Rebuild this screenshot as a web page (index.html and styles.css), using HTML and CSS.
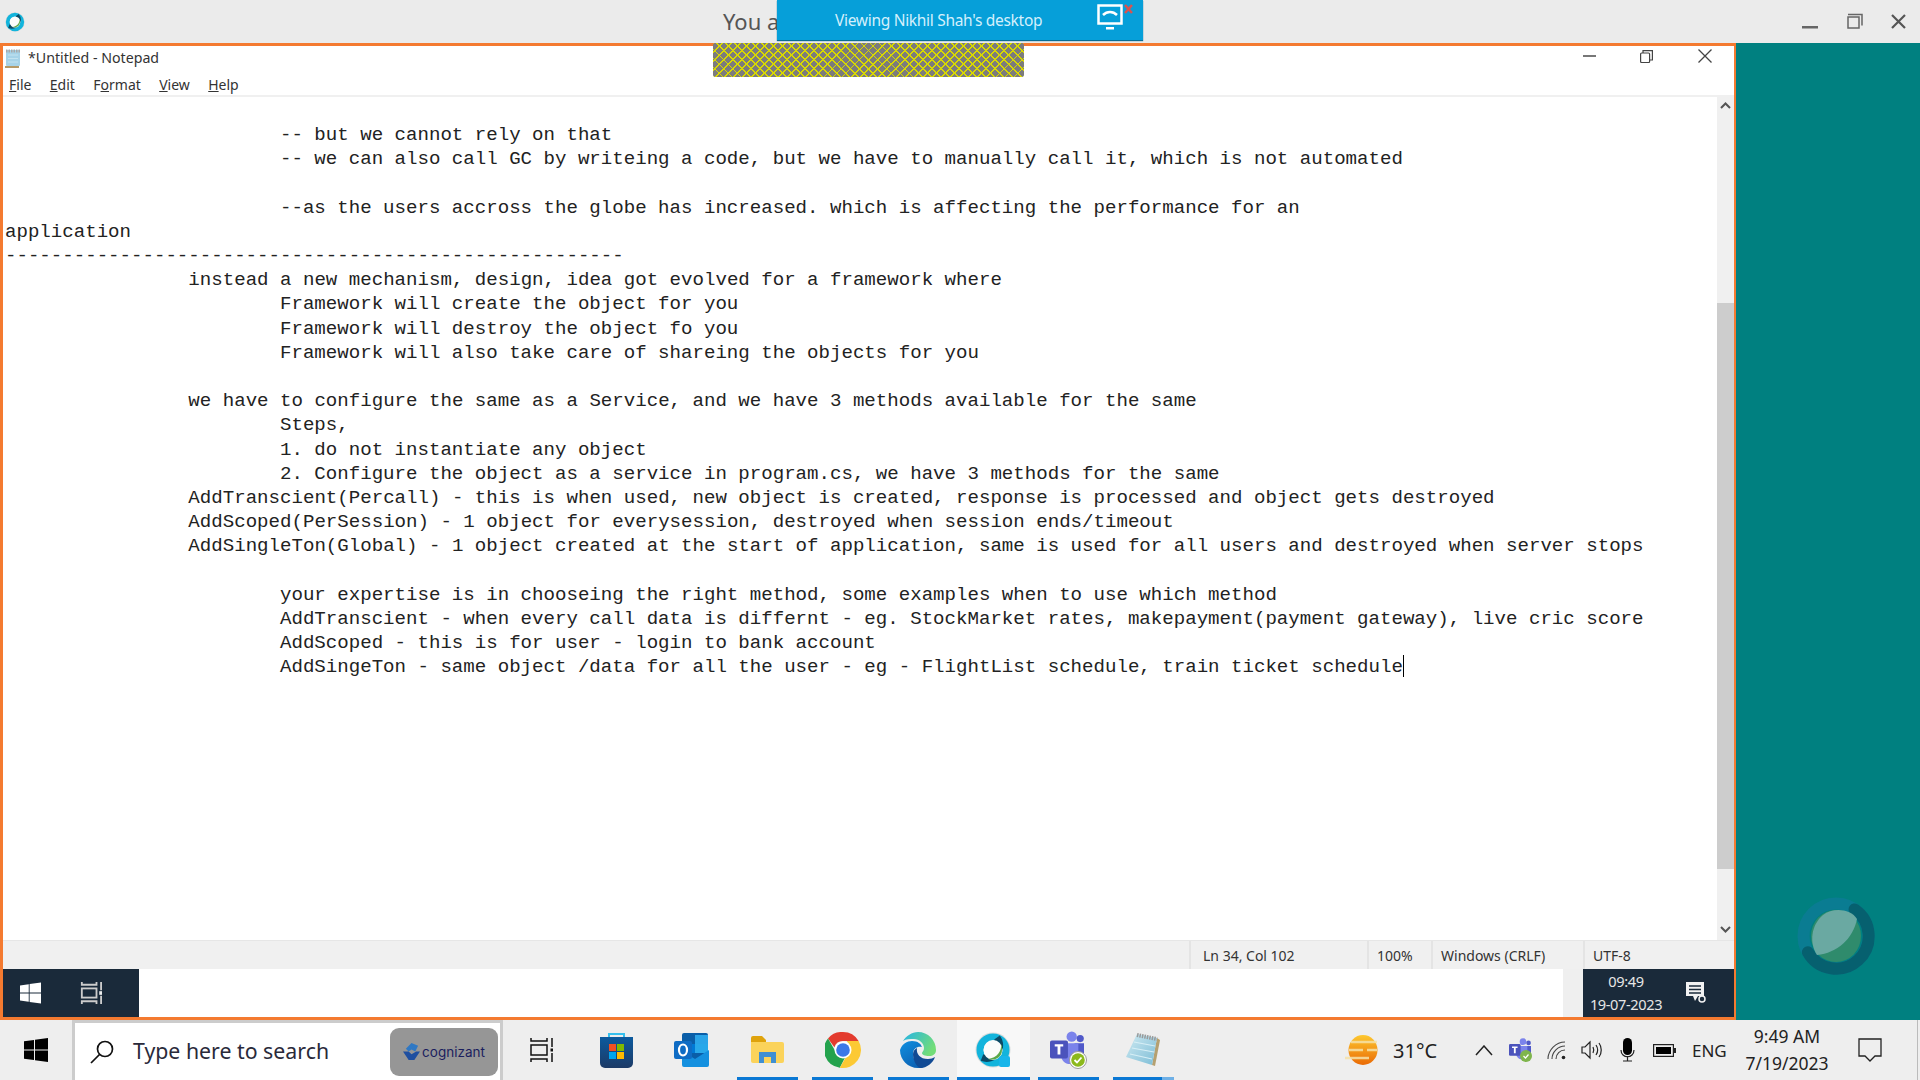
FILE: index.html
```html
<!DOCTYPE html>
<html lang="en">
<head>
    <meta charset="UTF-8">
    <title>Untitled - Notepad</title>
    <link rel="stylesheet" href="styles.css">
</head>
<body>

    <svg class="defs" aria-hidden="true">
        <defs>
            <linearGradient id="edgeB" x1="0" y1="0" x2="1" y2="0.5">
                <stop offset="0" stop-color="#25b4e6"/>
                <stop offset="1" stop-color="#72dd78"/>
            </linearGradient>
            <linearGradient id="edgeA" x1="0" y1="0" x2="0.6" y2="1">
                <stop offset="0" stop-color="#1190e0"/>
                <stop offset="1" stop-color="#0c62b4"/>
            </linearGradient>
            <linearGradient id="sun" x1="0" y1="0" x2="0" y2="1">
                <stop offset="0" stop-color="#fdc82f"/>
                <stop offset="1" stop-color="#ea6a05"/>
            </linearGradient>
            <linearGradient id="bag" x1="0" y1="0" x2="0" y2="1">
                <stop offset="0" stop-color="#0c5a9e"/>
                <stop offset="1" stop-color="#1c3a66"/>
            </linearGradient>
            <linearGradient id="page" x1="0" y1="0" x2="1" y2="1">
                <stop offset="0" stop-color="#cfeaf2"/>
                <stop offset="1" stop-color="#7dbdd6"/>
            </linearGradient>
            <symbol id="webex" viewBox="0 0 36 36">
                <circle cx="18" cy="18" r="17.500" fill="#d8dcdc"/>
                <circle cx="18" cy="18" r="13" fill="none" stroke="#12b4dc" stroke-width="7"/>
                <path d="M22 5.500a13 13 0 0 1-15 20" fill="none" stroke="#0b4a66" stroke-width="7"/>
                <ellipse cx="18" cy="18" rx="9.500" ry="10" fill="#fafcfb"/>
                <path d="M26 12c1 7-4 14-13 15 6 2 14-1 14-9 0-2 0-4-1-6z" fill="#5ba84a"/>
            </symbol>
            <symbol id="teams" viewBox="0 0 38 36">
                <circle cx="24" cy="6" r="5.500" fill="#7b83eb"/>
                <circle cx="33" cy="8" r="3.800" fill="#5059c9"/>
                <path d="M27 13h10v11c0 3-3 5-6 5s-4-1-4-3z" fill="#5059c9"/>
                <path d="M13 13h18v14c0 5-4 8-9 8s-9-4-9-8z" fill="#7b83eb"/>
                <rect x="1" y="10" width="19" height="19" rx="2" fill="#4b53bc"/>
                <path d="M6 14h9v2.500h-3V25H9v-8.500H6z" fill="#fff"/>
            </symbol>
        </defs>
    </svg>

    <header class="meeting-bar">
        <svg class="meeting-logo" viewBox="0 0 36 36"><use href="#webex"/></svg>
        <span class="meeting-title">You a</span>
        <div class="meeting-controls">
            <svg class="ctl-min" viewBox="0 0 16 3"><rect width="16" height="2.500" fill="#666"/></svg>
            <svg class="ctl-restore" viewBox="0 0 16 16" fill="none" stroke="#666" stroke-width="1.500"><rect x="1" y="4" width="11" height="11"/><path d="M1 1.500h14v11"/></svg>
            <svg class="ctl-close" viewBox="0 0 15 15" stroke="#555" stroke-width="2.200"><path d="M1 1l13 13M14 1L1 14"/></svg>
        </div>
    </header>

    <div class="share-tab">
        <span class="share-text">Viewing Nikhil Shah's desktop</span>
        <svg class="share-icon" viewBox="0 0 38 26" fill="none">
            <rect x="1.500" y="1.500" width="23" height="18" stroke="#fff" stroke-width="2.500"/>
            <path d="M6 11c4-4 10-4 14 0" stroke="#fff" stroke-width="2.500"/>
            <rect x="9" y="23" width="8" height="2.500" fill="#fff"/>
            <path d="M28 1l7 8M35 1l-7 8" stroke="#d9534f" stroke-width="2.500"/>
        </svg>
    </div>

    <div class="desktop">
        <main class="window">
            <div class="share-hatch"></div>

            <div class="title-row">
                <svg class="note-icon" viewBox="0 0 18 20">
                    <path d="M1 19h14" stroke="#b59a68" stroke-width="2"/>
                    <rect x="2" y="2" width="14" height="16" rx="1" fill="#a6d3e8"/>
                    <path d="M2 3h14" stroke="#a9a9a9" stroke-width="3" stroke-dasharray="1.500 1"/>
                    <path d="M4 7h10M4 10.500h10M4 14h10" stroke="#c3e3f0"/>
                </svg>
                <span class="title-text">*Untitled - Notepad</span>
                <div class="win-controls">
                    <svg class="win-min" viewBox="0 0 13 2"><rect width="13" height="2" fill="#777"/></svg>
                    <svg class="win-restore" viewBox="0 0 13 13" fill="none" stroke="#444" stroke-width="1.200"><rect x="0.600" y="3" width="9" height="9.500" rx="1"/><path d="M3 3V0.700h9.400V10H10"/></svg>
                    <svg class="win-close" viewBox="0 0 14 14" stroke="#444" stroke-width="1.300"><path d="M0.500 0.500l13 13M13.500 0.500l-13 13"/></svg>
                </div>
            </div>

            <nav class="menu-row">
                <span><u>F</u>ile</span>
                <span><u>E</u>dit</span>
                <span>F<u>o</u>rmat</span>
                <span><u>V</u>iew</span>
                <span><u>H</u>elp</span>
            </nav>

            <div class="editor">
<pre class="editor-text">			-- but we cannot rely on that
			-- we can also call GC by writeing a code, but we have to manually call it, which is not automated

			--as the users accross the globe has increased. which is affecting the performance for an
application
------------------------------------------------------
		instead a new mechanism, design, idea got evolved for a framework where
			Framework will create the object for you
			Framework will destroy the object fo you
			Framework will also take care of shareing the objects for you

		we have to configure the same as a Service, and we have 3 methods available for the same
			Steps,
			1. do not instantiate any object
			2. Configure the object as a service in program.cs, we have 3 methods for the same
		AddTranscient(Percall) - this is when used, new object is created, response is processed and object gets destroyed
		AddScoped(PerSession) - 1 object for everysession, destroyed when session ends/timeout
		AddSingleTon(Global) - 1 object created at the start of application, same is used for all users and destroyed when server stops

			your expertise is in chooseing the right method, some examples when to use which method
			AddTranscient - when every call data is differnt - eg. StockMarket rates, makepayment(payment gateway), live cric score
			AddScoped - this is for user - login to bank account
			AddSingeTon - same object /data for all the user - eg - FlightList schedule, train ticket schedule<span class="caret"></span></pre>
                <div class="scrollbar">
                    <svg class="arrow" viewBox="0 0 17 17" fill="none" stroke="#555" stroke-width="2"><path d="M4 11l4.500-4.500L13 11"/></svg>
                    <div class="thumb"></div>
                    <svg class="arrow arrow-down" viewBox="0 0 17 17" fill="none" stroke="#555" stroke-width="2"><path d="M4 6l4.500 4.500L13 6"/></svg>
                </div>
            </div>

            <div class="status-row">
                <span class="status-cell cell-pos">Ln 34, Col 102</span>
                <span class="status-cell cell-zoom">100%</span>
                <span class="status-cell cell-eol">Windows (CRLF)</span>
                <span class="status-cell cell-enc">UTF-8</span>
            </div>

            <div class="remote-bar">
                <div class="remote-left">
                    <svg class="remote-start" viewBox="0 0 24 24" fill="#fff"><path d="M0 3.300L10 2v9.400H0zM11 1.800L24 0v11.400H11zM0 12.600h10V22L0 20.700zM11 12.600h13V24l-13-1.800z"/></svg>
                    <svg class="remote-tasks" viewBox="0 0 24 24" fill="none" stroke="#ccc" stroke-width="2"><path d="M2 0v3h16V0M2 24v-3h16v3M23 0v9M23 15v9"/><rect x="2" y="7" width="16" height="10"/><rect x="21" y="10" width="4" height="4" fill="#eee" stroke="none"/></svg>
                </div>
                <div class="remote-fill"></div>
                <div class="remote-gap"></div>
                <div class="remote-clock">
                    <div class="remote-time">
                        <span>09:49</span>
                        <span>19-07-2023</span>
                    </div>
                    <svg class="remote-note" viewBox="0 0 20 22"><path d="M0 0h18v14l-6 0-3 5-2-5H0z" fill="#f2f2f2"/><path d="M3 4h12M3 7.500h12M3 11h12" stroke="#1a2a3a" stroke-width="1.300"/><circle cx="16" cy="17" r="3" fill="none" stroke="#f2f2f2" stroke-width="1.500"/></svg>
                </div>
            </div>
        </main>

        <aside class="wallpaper">
            <svg class="wallpaper-logo" viewBox="0 0 78 78" fill="none">
                <circle cx="39" cy="39" r="32.500" stroke="#0a7c92" stroke-width="12"/>
                <path d="M57.600 12.400A32.500 32.500 0 1 1 10.900 55.200" stroke="#06606f" stroke-width="12" stroke-linecap="round"/>
                <ellipse cx="39" cy="39" rx="25" ry="26" fill="#2f8b6c"/>
                <path d="M60 22C54 12 36 10 26 18 14 28 12 46 20 58 40 56 56 42 60 22z" fill="#6aa9a2"/>
            </svg>
        </aside>
    </div>

    <footer class="taskbar">
        <div class="start-btn">
            <svg class="start-icon" viewBox="0 0 24 24" fill="#000"><path d="M0 3.300L10 2v9.400H0zM11 1.800L24 0v11.400H11zM0 12.600h10V22L0 20.700zM11 12.600h13V24l-13-1.800z"/></svg>
        </div>

        <div class="search-box">
            <svg class="search-icon" viewBox="0 0 24 24" fill="none" stroke="#111" stroke-width="1.700"><circle cx="15" cy="9" r="7.500"/><path d="M9.500 14.500L1 23"/></svg>
            <span class="search-text">Type here to search</span>
            <div class="brand-pill">
                <svg class="brand-icon" viewBox="0 0 18 18"><path d="M9 0l7 3-3 6-4-2-3 2-3-3z" fill="#2f78c4"/><path d="M0 9l6 0 3 3 5-3 4 0-6 9-6 0z" fill="#1f4fa0"/></svg>
                <span class="brand-text">cognizant</span>
            </div>
        </div>

        <div class="apps">
            <div class="app">
                <svg class="icon-tasks" viewBox="0 0 24 24" fill="none" stroke="#111" stroke-width="1.500"><path d="M2 0v3h16V0M2 24v-3h16v3M23 0v9M23 15v9"/><rect x="2" y="7" width="16" height="10"/><rect x="21.500" y="10.500" width="3" height="3" fill="#111" stroke="none"/></svg>
            </div>
            <div class="app">
                <svg class="icon-store" viewBox="0 0 35 36">
                    <path d="M10 6V2h15v4" fill="none" stroke="#35c0ee" stroke-width="2"/>
                    <path d="M1 5h33v26a5 5 0 0 1-5 5H6a5 5 0 0 1-5-5z" fill="url(#bag)"/>
                    <rect x="10" y="12" width="7" height="7" fill="#f25022"/>
                    <rect x="18" y="12" width="7" height="7" fill="#7fba00"/>
                    <rect x="10" y="20" width="7" height="7" fill="#00a4ef"/>
                    <rect x="18" y="20" width="7" height="7" fill="#ffb900"/>
                </svg>
            </div>
            <div class="app">
                <svg class="icon-outlook" viewBox="0 0 35 34">
                    <rect x="8" y="0" width="26" height="30" rx="2" fill="#0a5ea8"/>
                    <rect x="21" y="2" width="13" height="9" fill="#2aa4e8"/>
                    <rect x="21" y="11" width="13" height="9" fill="#28a8ea"/>
                    <rect x="8" y="11" width="13" height="9" fill="#0078d4"/>
                    <path d="M8 18l13 8 14-9v15a2 2 0 0 1-2 2H10a2 2 0 0 1-2-2z" fill="#1490df"/>
                    <rect x="0" y="8" width="18" height="18" rx="2" fill="#0f6cc4"/>
                    <ellipse cx="9" cy="17" rx="4" ry="5.500" fill="none" stroke="#fff" stroke-width="2.200"/>
                </svg>
            </div>
            <div class="app running">
                <svg class="icon-folder" viewBox="0 0 33 27">
                    <path d="M0 2a2 2 0 0 1 2-2h9l4 4v4H0z" fill="#dfa30c"/>
                    <path d="M0 6h31a2 2 0 0 1 2 2v17a2 2 0 0 1-2 2H2a2 2 0 0 1-2-2z" fill="#fbd35a"/>
                    <path d="M8 27V16h17v11h-5v-6h-7v6z" fill="#3f8fd2"/>
                </svg>
            </div>
            <div class="app running">
                <svg class="icon-chrome" viewBox="0 0 36 36">
                    <path d="M18 0a18 18 0 0 1 15.600 9H18a9 9 0 0 0-8.600 6.300L3 6.500A18 18 0 0 1 18 0z" fill="#e33b2e"/>
                    <path d="M3 6.500l7.800 13.500a9 9 0 0 0 9.500 5L14.800 35.700A18 18 0 0 1 3 6.500z" fill="#23a24d"/>
                    <path d="M33.600 9A18 18 0 0 1 14.800 35.700l7.800-13.500a9 9 0 0 0-1-13.200z" fill="#fcc934"/>
                    <circle cx="18" cy="18" r="8.500" fill="#fff"/>
                    <circle cx="18" cy="18" r="6.800" fill="#3b78e7"/>
                </svg>
            </div>
            <div class="app running">
                <svg class="icon-edge" viewBox="0 0 36 36">
                    <path d="M3 9C6 4 12 0 18 0c10 0 18 8 18 18 0 4-3 6-7 6-4 0-7-1-7-3 0-1 2-2 2-5 0-5-5-9-10-9-4 0-8 0-11 2z" fill="url(#edgeB)"/>
                    <path d="M0 18C2 12 7 9 12 9c6 0 9 3 10 6-4-1-9 1-9 7 0 6 5 12 11 14H18C8 36 0 28 0 18z" fill="url(#edgeA)"/>
                    <path d="M13 22c0-3 2-5 4-6-1 6 3 11 11 11 3 0 5-1 7-2-2 6-8 11-15 11-4-2-7-8-7-14z" fill="#114a94"/>
                </svg>
            </div>
            <div class="app running app-active">
                <svg class="icon-webex" viewBox="0 0 36 36">
                    <use href="#webex"/>
                    <rect x="24" y="24" width="11" height="11" rx="2" fill="#17b5ea"/>
                </svg>
            </div>
            <div class="app running app-teams">
                <svg class="icon-teams" viewBox="0 0 38 38">
                    <use href="#teams" width="36" height="34"/>
                    <circle cx="29" cy="29" r="8.500" fill="#fff" stroke="#999"/>
                    <circle cx="29" cy="29" r="6.800" fill="#8cb91c"/>
                    <path d="M25.500 29l2.500 2.500 4.500-5" fill="none" stroke="#fff" stroke-width="1.800"/>
                </svg>
            </div>
            <div class="app running app-note">
                <svg class="icon-note" viewBox="0 0 34 34">
                    <path d="M31 5l3 2-5 26-3-1z" fill="#b5a070"/>
                    <path d="M11 1l20 4-5 27L0 24z" fill="url(#page)"/>
                    <path d="M11 2l20 4" stroke="#9a9a9a" stroke-width="4" stroke-dasharray="1.500 1"/>
                    <path d="M8 9l21 4M6 15l22 4M4 21l22 5" stroke="#d7eff6" stroke-width="1.200"/>
                </svg>
            </div>
        </div>

        <div class="tray">
            <svg class="icon-sun" viewBox="0 0 35 30">
                <ellipse cx="18" cy="15" rx="14.500" ry="15" fill="url(#sun)"/>
                <path d="M6 7h26M4 15h14M22 15h10M0 23h24" stroke="#f6e2a8" stroke-width="2.500" opacity="0.850"/>
            </svg>
            <span class="temp">31°C</span>
            <svg class="icon-chevron" viewBox="0 0 18 11" fill="none" stroke="#222" stroke-width="1.500"><path d="M1 10l8-9 8 9"/></svg>
            <svg class="icon-tray-teams" viewBox="0 0 24 24">
                <use href="#teams" width="24" height="22"/>
                <circle cx="18" cy="18" r="6" fill="#7fb54c"/>
                <path d="M15.500 18l2 2 3-3.500" fill="none" stroke="#fff" stroke-width="1.200"/>
            </svg>
            <svg class="icon-wifi" viewBox="0 0 19 19" fill="none" stroke="#444" stroke-width="1.100"><path d="M1 18C1 9 9 1 18 1M5 18C5 11 11 5 18 5M9 18c0-5 4-9 9-9"/><circle cx="16.500" cy="16.500" r="1.800" fill="#222" stroke="none"/></svg>
            <svg class="icon-volume" viewBox="0 0 22 20" fill="none" stroke="#222" stroke-width="1.200"><path d="M1 7h3l5-5v16l-5-5H1z"/><path d="M12 7c1 2 1 4 0 6M15 5c2 3 2 7 0 10M18 3c3 4 3 10 0 14"/></svg>
            <svg class="icon-mic" viewBox="0 0 15 24"><rect x="3" y="0" width="9" height="17" rx="4.500" fill="#000"/><path d="M1 12c0 9 13 9 13 0M7.500 18v5M3 23h9" fill="none" stroke="#222" stroke-width="1.200"/></svg>
            <svg class="icon-battery" viewBox="0 0 23 13"><rect x="0.600" y="0.600" width="19.800" height="11.800" fill="none" stroke="#222" stroke-width="1.200"/><rect x="3" y="3" width="15" height="7" fill="#000"/><rect x="21" y="4" width="2" height="5" fill="#222"/></svg>
            <span class="lang">ENG</span>
            <div class="clock">
                <span>9:49 AM</span>
                <span>7/19/2023</span>
            </div>
            <svg class="icon-notify" viewBox="0 0 24 25" fill="none" stroke="#222" stroke-width="1.300"><path d="M1 1h22v17h-6l-5 5-5-5H1z"/></svg>
            <div class="show-desktop"></div>
        </div>
    </footer>

</body>
</html>
```

FILE: styles.css
```css
html, body {
    height: 100%;
}

body {
    margin: 0;
    width: 1920px;
    height: 1080px;
    overflow: hidden;
    display: flex;
    flex-direction: column;
    position: relative;
    font-family: "Noto Sans", "Open Sans", sans-serif;
    color: #222;
    background-color: #eeeeee;
}

svg {
    display: block;
    flex-shrink: 0;
}

.defs {
    position: absolute;
    width: 0;
    height: 0;
}

/* meeting bar on top */
.meeting-bar {
    height: 43px;
    flex-shrink: 0;
    display: flex;
    align-items: center;
    background-color: #ebebeb;
}

.meeting-logo {
    width: 20px;
    height: 20px;
    margin-left: 5px;
}

.meeting-title {
    margin-left: 698px;
    margin-top: -2px;
    font-size: 22px;
    color: #555;
}

.meeting-controls {
    margin-left: auto;
    display: flex;
    align-items: center;
}

.ctl-min {
    width: 16px;
    height: 3px;
    margin-top: 11px;
    margin-right: 29px;
}

.ctl-restore {
    width: 16px;
    height: 16px;
    margin-right: 28px;
    margin-top: -2px;
}

.ctl-close {
    width: 15px;
    height: 15px;
    margin-right: 14px;
}

.share-tab {
    position: absolute;
    left: 777px;
    top: 0;
    width: 366px;
    height: 40px;
    display: flex;
    align-items: center;
    background-color: #069fd9;
    box-shadow: 0 1px 1px #0a6c92;
    z-index: 2;
}

.share-text {
    margin-left: 58px;
    font-size: 15.5px;
    color: #d4f0fc;
    letter-spacing: -0.3px;
}

.share-icon {
    width: 38px;
    height: 26px;
    margin-left: 55px;
    margin-top: -6px;
}

/* main area */
.desktop {
    flex: 1;
    display: flex;
    min-height: 0;
}

.window {
    width: 1736px;
    box-sizing: border-box;
    position: relative;
    display: flex;
    flex-direction: column;
    background-color: #fff;
    border-style: solid;
    border-color: #f47a30;
    border-width: 3px 2px 3px 3px;
}

.share-hatch {
    position: absolute;
    left: 710px;
    top: -3px;
    width: 311px;
    height: 34px;
    border-radius: 2px;
    background-color: #7c7c7c;
    background-image:
        repeating-linear-gradient(45deg, #d8d800 0, #d8d800 1.300px, transparent 1.300px, transparent 6.400px),
        repeating-linear-gradient(-45deg, #d8d800 0, #d8d800 1.300px, transparent 1.300px, transparent 6.400px);
}

.title-row {
    height: 28px;
    box-sizing: border-box;
    padding-bottom: 5px;
    display: flex;
    align-items: center;
    font-size: 14.2px;
}

.note-icon {
    width: 18px;
    height: 20px;
    margin-left: 1px;
}

.title-text {
    margin-left: 6px;
    color: #333;
}

.win-controls {
    margin-left: auto;
    display: flex;
    align-items: center;
    margin-top: -3px;
}

.win-min {
    width: 13px;
    height: 2px;
    margin-right: 44px;
}

.win-restore {
    width: 13px;
    height: 13px;
    margin-right: 45px;
}

.win-close {
    width: 14px;
    height: 14px;
    margin-right: 22px;
}

.menu-row {
    height: 23px;
    box-sizing: border-box;
    display: flex;
    align-items: center;
    font-size: 14px;
    color: #333;
    padding-left: 6px;
    gap: 18.4px;
    border-bottom: 2px solid #f0f0f0;
}

.editor {
    flex: 1;
    display: flex;
    min-height: 0;
}

.editor-text {
    flex: 1;
    margin: 0;
    padding: 26px 0 0 2px;
    font-family: "Liberation Mono", monospace;
    font-size: 19.1px;
    line-height: 24.2px;
    tab-size: 8;
    color: #222;
    overflow: hidden;
}

.caret {
    display: inline-block;
    width: 1px;
    height: 22px;
    background-color: #000;
    vertical-align: -5px;
}

.scrollbar {
    width: 17px;
    display: flex;
    flex-direction: column;
    background-color: #f0f0f0;
}

.arrow {
    width: 17px;
    height: 17px;
}

.arrow-down {
    margin-top: auto;
    margin-bottom: 2px;
}

.thumb {
    height: 566px;
    margin-top: 189px;
    background-color: #cdcdcd;
}

.status-row {
    height: 29px;
    flex-shrink: 0;
    display: flex;
    align-items: center;
    background-color: #f0f0f0;
    font-size: 14px;
    color: #333;
    border-top: 1px solid #e6e6e6;
    box-sizing: border-box;
}

.status-cell {
    height: 100%;
    display: flex;
    align-items: center;
    box-sizing: border-box;
    padding-left: 12px;
    border-left: 2px solid #e4e4e4;
}

.cell-pos {
    width: 178px;
    margin-left: 1186px;
}

.cell-zoom {
    width: 64px;
    padding-left: 8px;
}

.cell-eol {
    width: 152px;
    padding-left: 8px;
}

.cell-enc {
    flex: 1;
    padding-left: 8px;
}

.remote-bar {
    height: 48px;
    flex-shrink: 0;
    display: flex;
}

.remote-left {
    width: 136px;
    display: flex;
    align-items: center;
    background-color: #1a2a3a;
}

.remote-start {
    width: 21px;
    height: 22px;
    margin-left: 17px;
}

.remote-tasks {
    width: 22px;
    height: 22px;
    margin-left: 39px;
}

.remote-fill {
    width: 1424px;
}

.remote-gap {
    width: 20px;
    background-color: #efefef;
}

.remote-clock {
    flex: 1;
    display: flex;
    align-items: center;
    background-color: #1a2a3a;
    color: #e6e6e6;
}

.remote-time {
    width: 86px;
    display: flex;
    flex-direction: column;
    align-items: center;
    font-size: 14.6px;
    letter-spacing: -0.4px;
    line-height: 23px;
}

.remote-note {
    width: 20px;
    height: 22px;
    margin-left: 17px;
}

.wallpaper {
    flex: 1;
    position: relative;
    background-color: #008080;
}

.wallpaper-logo {
    position: absolute;
    left: 61px;
    top: 854px;
    width: 78px;
    height: 78px;
}

/* windows taskbar */
.taskbar {
    height: 60px;
    flex-shrink: 0;
    display: flex;
    align-items: stretch;
    background-color: #eeeeee;
}

.start-btn {
    width: 72px;
    flex-shrink: 0;
    display: flex;
    align-items: center;
    justify-content: center;
}

.start-icon {
    width: 24px;
    height: 24px;
}

.search-box {
    width: 431px;
    flex-shrink: 0;
    box-sizing: border-box;
    display: flex;
    align-items: center;
    background-color: #fff;
    border: 3px solid #cccccc;
    border-bottom: none;
    padding-right: 2px;
}

.search-icon {
    width: 24px;
    height: 24px;
    margin-left: 15px;
}

.search-text {
    margin-left: 19px;
    margin-top: -2px;
    font-size: 21.3px;
    color: #2a2a3a;
}

.brand-pill {
    width: 108px;
    height: 48px;
    margin-left: auto;
    border-radius: 9px;
    background-color: #969696;
    display: flex;
    align-items: center;
    justify-content: center;
    gap: 2px;
}

.brand-icon {
    width: 17px;
    height: 17px;
}

.brand-text {
    font-family: Inter, sans-serif;
    font-size: 13.5px;
    color: #1b1e5e;
}

.apps {
    display: flex;
    gap: 14.5px;
    padding-left: 7px;
}

.app {
    width: 61px;
    box-sizing: border-box;
    padding-bottom: 1px;
    display: flex;
    align-items: center;
    justify-content: center;
}

.running {
    background-image: linear-gradient(#0a78d4, #0a78d4);
    background-repeat: no-repeat;
    background-position: bottom;
    background-size: 100% 3px;
}

.app-active {
    width: 73px;
    margin: 0 -6.5px;
    background-color: #f8f8f8;
}

.app-note {
    background-image: linear-gradient(to right, #0a78d4 80%, #6fb0e6 80%);
}

.icon-tasks {
    width: 24px;
    height: 24px;
}

.icon-store {
    width: 35px;
    height: 36px;
}

.icon-outlook {
    width: 35px;
    height: 34px;
}

.icon-folder {
    width: 33px;
    height: 27px;
}

.icon-chrome,
.icon-edge,
.icon-webex {
    width: 36px;
    height: 36px;
}

.icon-teams {
    width: 38px;
    height: 38px;
}

.icon-note {
    width: 34px;
    height: 34px;
    margin-left: -2px;
}

.tray {
    margin-left: auto;
    display: flex;
    align-items: center;
    gap: 15px;
}

.icon-sun {
    width: 35px;
    height: 30px;
}

.temp {
    width: 43px;
    margin-left: -2px;
    margin-right: 24px;
    font-size: 20px;
    white-space: nowrap;
}

.icon-chevron {
    width: 18px;
    height: 11px;
}

.icon-tray-teams {
    width: 24px;
    height: 24px;
}

.icon-wifi {
    width: 19px;
    height: 19px;
}

.icon-volume {
    width: 22px;
    height: 20px;
}

.icon-mic {
    width: 15px;
    height: 24px;
    margin-left: 2px;
}

.icon-battery {
    width: 23px;
    height: 13px;
    margin-left: 3px;
}

.lang {
    width: 32px;
    margin-left: 1px;
    font-size: 17px;
    white-space: nowrap;
}

.clock {
    width: 104px;
    margin-left: -4px;
    display: flex;
    flex-direction: column;
    align-items: center;
    font-size: 17.5px;
    line-height: 27px;
}

.icon-notify {
    width: 24px;
    height: 25px;
    margin-left: 4px;
}

.show-desktop {
    width: 3px;
    height: 100%;
    margin-left: 20px;
    border-left: 1px solid #bbbbbb;
    box-sizing: border-box;
}
```
